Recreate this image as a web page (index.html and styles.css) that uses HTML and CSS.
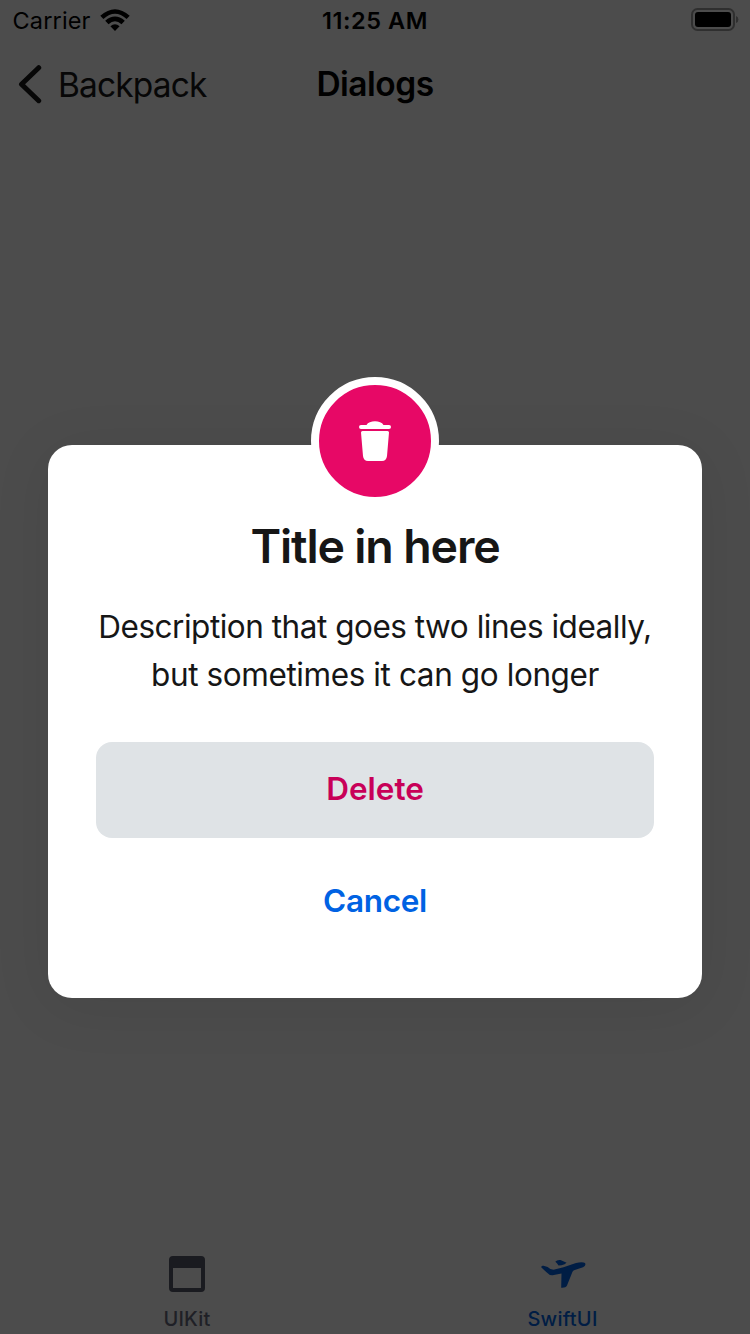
FILE: index.html
```html
<!DOCTYPE html>
<html lang="en">
<head>
<meta charset="utf-8">
<title>Dialogs</title>
<link rel="stylesheet" href="styles.css">
</head>
<body>
<div class="screen">
  <header class="status">
    <div class="status-left">
      <span class="carrier">Carrier</span>
      <svg class="wifi" width="30" height="22" viewBox="0 0 30 22"><path d="M0.300 6.800Q15-6.400 29.700 6.800L26.600 10Q15-.4 3.400 10ZM5.200 11.800Q15 3.400 24.800 11.800L21.500 15.200Q15 9.400 8.500 15.200ZM10.400 17.200Q15 13.200 19.600 17.200L15 21.900Z"/></svg>
    </div>
    <span class="time">11:25 AM</span>
    <div class="status-right">
      <svg class="battery" width="48" height="24" viewBox="0 0 48 24"><rect x="1" y="1" width="42" height="21" rx="5.500" fill="none" stroke="#2f2f2f" stroke-width="2"/><rect x="4" y="4" width="36" height="15" rx="3"/><path d="M45 8Q47.400 8.700 47.400 11.500T45 15Z" fill="#2f2f2f"/></svg>
    </div>
  </header>
  <nav class="navbar">
    <a class="back">
      <svg class="chevron" width="24" height="40" viewBox="0 0 24 40"><path d="M20.700 3.700L3.500 20.200L20.700 36.700" fill="none" stroke="#070707" stroke-width="5" stroke-linecap="round" stroke-linejoin="round"/></svg>
      <span class="back-label">Backpack</span>
    </a>
    <h1 class="nav-title">Dialogs</h1>
    <span></span>
  </nav>
  <main class="content">
    <section class="dialog">
      <div class="badge">
        <svg width="34" height="42" viewBox="0 0 34 42" fill="#fff"><path d="M1 7Q1 5 3 5H8.500C11 0 23 0 25.500 5H31Q33 5 33 7T31 9H3Q1 9 1 7ZM4.500 11H29.500Q31 11 31 12.500L29 36Q28.400 41 24 41H10Q5.600 41 5 36L3 12.500Q3 11 4.500 11Z"/></svg>
      </div>
      <h2 class="title">Title in here</h2>
      <p class="description"><span class="line-one">Description that goes two lines ideally,</span><br><span class="line-two">but sometimes it can go longer</span></p>
      <button class="button delete"><span>Delete</span></button>
      <button class="button cancel"><span>Cancel</span></button>
    </section>
  </main>
  <footer class="tabs">
    <div class="tab uikit">
      <svg width="48" height="48" viewBox="0 0 48 48"><path fill-rule="evenodd" d="M10 6H38Q42 6 42 10V38Q42 42 38 42H10Q6 42 6 38V10Q6 6 10 6ZM10 18V38H38V18Z"/></svg>
      <span>UIKit</span>
    </div>
    <div class="tab swiftui">
      <svg width="48" height="48" viewBox="0 0 48 48"><path d="M2.200 17.200Q2.500 15.500 4.500 15.800L8.600 17Q11.500 20 15.500 19.600L24.500 17.300L37 13Q43.500 11.300 46 13Q47.400 15.500 44 17.200L35 20.200Q33.200 21.200 32.600 24L28 35.500Q26.800 38 22.200 37.700L22.500 23.500L13.500 25.300Q10.300 25.500 7.800 22.600ZM16.300 11.800Q18 9.600 21.500 10L27.600 12.800Q26 14.700 22.500 15.300L19.500 15.500Q18 13 16.300 11.800Z"/></svg>
      <span>SwiftUI</span>
    </div>
  </footer>
</div>
</body>
</html>
```
FILE: styles.css
```css
* { box-sizing: border-box; }
body { margin: 0; font-family: Inter, "Liberation Sans", sans-serif; }
h1, h2, p { margin: 0; }
span { white-space: nowrap; }
svg { display: block; flex: none; }
.screen { width: 750px; height: 1334px; display: flex; flex-direction: column; background: #4c4c4c; overflow: hidden; }
.status { height: 40px; display: grid; grid-template-columns: 1fr auto 1fr; align-items: center; font-size: 23.500px; line-height: 40px; color: #000; }
.status-left { display: flex; align-items: center; gap: 9px; padding-left: 12.500px; }
.carrier, .time { padding-top: 2px; line-height: 38px; }
.carrier { letter-spacing: .15px; }
.time { font-weight: 600; letter-spacing: .55px; }
.status-right { display: flex; justify-content: flex-end; padding-right: 11px; }
.navbar { height: 88px; display: grid; grid-template-columns: 1fr auto 1fr; align-items: center; font-size: 34px; line-height: 44px; color: #070707; }
.back { display: flex; align-items: center; gap: 16px; padding-left: 18px; }
.back-label { font-size: 33.500px; letter-spacing: -.85px; padding-top: 1px; }
.nav-title { font-size: 33.500px; font-weight: 600; letter-spacing: -.5px; color: #000; }
.content { flex: 1; padding: 317px 48px 0; }
.dialog { height: 553px; padding: 0 48px; display: flex; flex-direction: column; align-items: center; background: #fff; border-radius: 24px; box-shadow: 0 8px 60px rgba(0, 0, 0, .08); color: #161616; }
.badge { width: 128px; height: 128px; margin-top: -68px; flex: none; display: flex; align-items: center; justify-content: center; border: 8px solid #fff; border-radius: 50%; background: #e70866; }
.title { margin-top: 13px; font-size: 46.500px; line-height: 56px; font-weight: 600; letter-spacing: -1.150px; }
.description { margin-top: 29px; font-size: 31.500px; line-height: 48px; text-align: center; }
.line-one { letter-spacing: -.48px; }
.line-two { letter-spacing: -.4px; }
.button { width: 558px; height: 96px; flex: none; border: 0; border-radius: 16px; font: 600 31.500px/48px Inter, sans-serif; }
.button span { display: block; margin-top: -2px; }
.delete { margin-top: 43px; background: #dfe3e6; color: #c80058; }
.cancel { margin-top: 16px; background: none; color: #0062e3; letter-spacing: -.3px; }
.tabs { height: 98px; display: grid; grid-template-columns: 1fr 1fr; }
.tab { display: flex; flex-direction: column; align-items: center; padding-top: 14px; font-size: 20px; line-height: 24px; font-weight: 500; gap: 9px; }
.uikit { color: #1f2026; fill: #1a1b20; padding-right: 1px; letter-spacing: .2px; }
.swiftui { color: #001d44; fill: #001d44; letter-spacing: .25px; }
```
